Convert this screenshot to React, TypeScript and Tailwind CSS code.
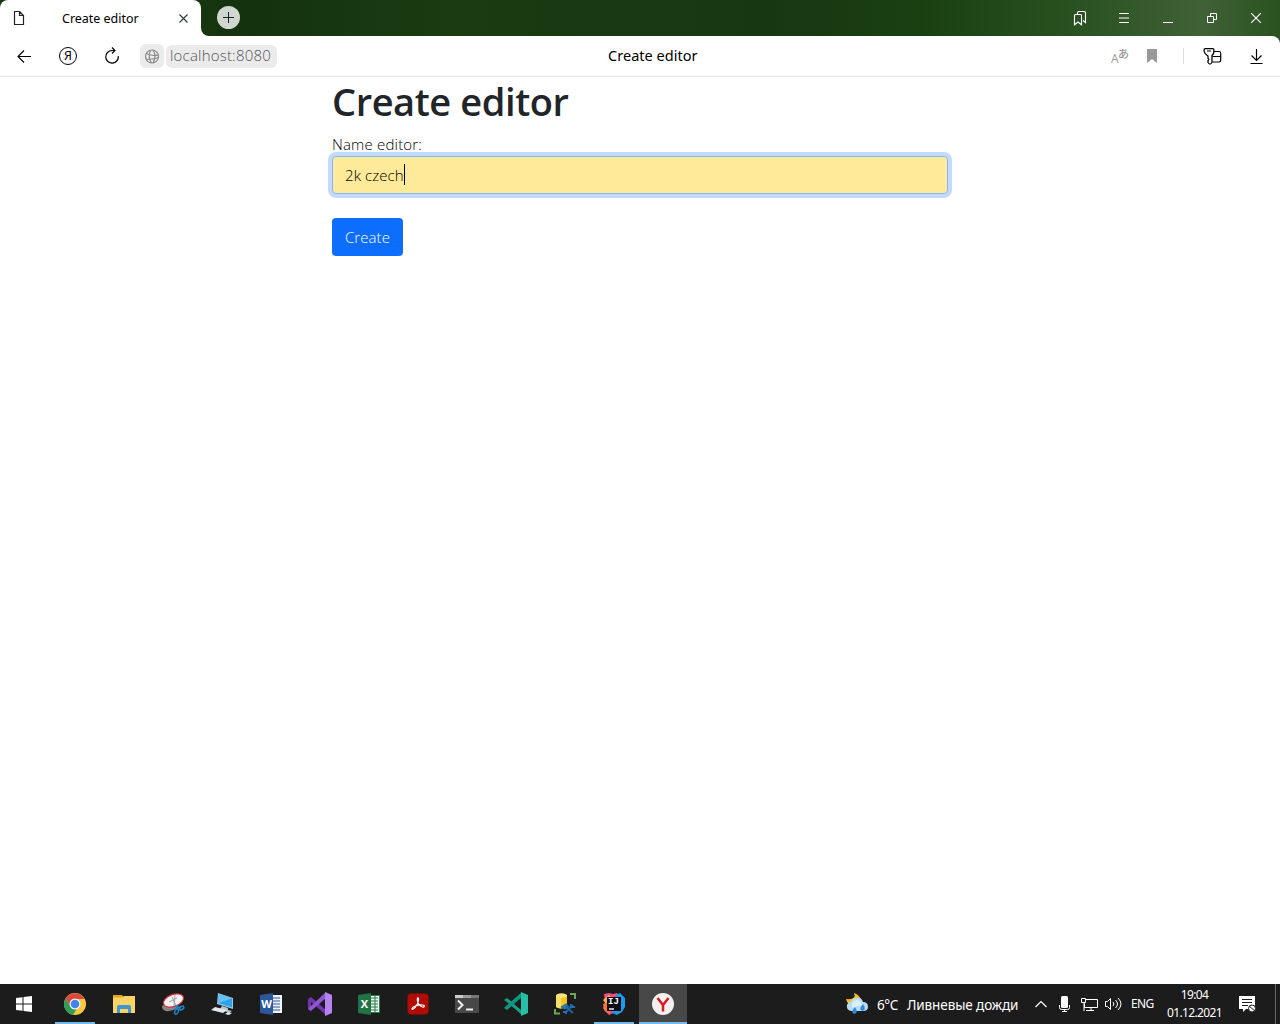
import type { ReactNode } from "react";

function Tile({ children, running = false, active = false }: { children: ReactNode; running?: boolean; active?: boolean }) {
  return (
    <div className={`relative flex h-10 w-12 shrink-0 items-center justify-center ${active ? "bg-[#484848]" : ""}`}>
      {children}
      {(running || active) && (
        <span className={`absolute bottom-0 h-0.5 bg-[#76b9ed] ${active ? "inset-x-0" : "inset-x-1"}`} />
      )}
    </div>
  );
}

function Svg({ w = 24, h = 24, children }: { w?: number; h?: number; children: ReactNode }) {
  return (
    <svg width={w} height={h} viewBox={`0 0 ${w} ${h}`} fill="none" className="shrink-0">
      {children}
    </svg>
  );
}

function TabStrip() {
  return (
    <header className="flex h-9 shrink-0 bg-[linear-gradient(90deg,#173610_0%,#14320e_20%,#193c12_35%,#173712_60%,#1a4012_72%,#28501f_83%,#3f6136_94%,#2a521f_100%)] text-white">
      <div className="flex h-9 w-[201px] items-center rounded-t-lg bg-white text-black">
        <div className="ml-2 flex w-[22px] justify-center">
          <Svg w={12} h={14}>
            <path d="M1.5.5h5l4 4v9h-9zM6.5.5v4h4" stroke="#20242b" strokeWidth="1.2" />
          </Svg>
        </div>
        <span className="ml-8 mt-px w-[78px] whitespace-nowrap font-['Noto_Sans',sans-serif] text-[12.5px] leading-4 tracking-[-0.02px]">Create editor</span>
        <div className="ml-[39px]">
          <Svg w={9} h={9}>
            <path d="m.5.5 8 8m0-8-8 8" stroke="#30343b" strokeWidth="1.1" />
          </Svg>
        </div>
      </div>
      <div className="h-9 w-4 bg-white">
        <div className="h-9 w-4 rounded-bl-lg bg-[#17360f]" />
      </div>
      <button className="mt-1.5 flex size-[23px] items-center justify-center rounded-full bg-[#d0d7cf]">
        <Svg w={11} h={11}>
          <path d="M0 5.5h11M5.5 0v11" stroke="#182029" />
        </Svg>
      </button>
      <div className="ml-auto flex items-center">
        <div className="flex w-11 justify-center">
          <Svg w={14} h={15}>
            <path d="M1.5 4.5q0-1 1-1h5q1 0 1 1v9.300L5 11l-3.500 2.800zM4.500 3V2q0-1.500 1.500-1.500h5q1.500 0 1.500 1.500v9.500L10 9.500" stroke="white" strokeWidth="1.1" />
          </Svg>
        </div>
        <div className="flex w-11 justify-center">
          <Svg w={10} h={10}>
            <path d="M0 .5h10M0 5h10M0 9.500h10" stroke="white" />
          </Svg>
        </div>
        <div className="flex w-11 justify-center pt-2">
          <Svg w={10} h={2}>
            <path d="M0 1.500h10" stroke="white" />
          </Svg>
        </div>
        <div className="flex w-11 justify-center">
          <Svg w={10} h={10}>
            <path d="M.5 3.500h6v6h-6zM3.500 3.500v-3h6v6h-3" stroke="white" />
          </Svg>
        </div>
        <div className="mr-0.5 flex w-11 justify-center">
          <Svg w={10} h={10}>
            <path d="m0 0 10 10M10 0 0 10" stroke="white" strokeWidth="1.1" />
          </Svg>
        </div>
      </div>
    </header>
  );
}

function AddressBar() {
  return (
    <div className="bg-[#2c5120]">
      <nav className="flex h-[41px] items-center rounded-tr-lg border-b border-[#e5e5e5] bg-white text-black">
        <div className="ml-0.5 flex w-11 justify-center">
          <Svg w={14} h={14}>
            <path d="M7 1.500 1 7.500l6 6M1 7.500h13" stroke="black" strokeWidth="1.15" />
          </Svg>
        </div>
        <div className="flex w-11 justify-center">
          <div className="flex size-[18px] items-center justify-center rounded-full border-[1.3px] border-black font-['Noto_Sans',sans-serif] text-[12.500px] leading-none">Я</div>
        </div>
        <div className="flex w-11 justify-center">
          <Svg w={16} h={18}>
            <path d="M8 3.500a6.300 6.300 0 1 0 6.300 5.500M7 3.500h4M8 .5l3 3-3 3" stroke="black" strokeWidth="1.2" />
          </Svg>
        </div>
        <div className="ml-1.5 flex size-6 items-center justify-center rounded-md bg-[#ebebeb]">
          <Svg w={15} h={15}>
            <g stroke="#8a8a8a" strokeWidth="1.150">
              <circle cx="7" cy="7.500" r="6.500" />
              <path d="M1 10q6 1 12.500-1.500M1.500 4.500q5 3 12 1.500M5.500 1.500q-3 6 1 12.500M8 1q4 6 0 13" />
            </g>
          </Svg>
        </div>
        <div className="ml-0.5 flex h-[23px] w-[111px] items-center rounded-md bg-[#ebebeb] pb-px pl-1 font-['Open_Sans',sans-serif] text-[15px] font-light tracking-[0.2px] text-[#555]">
          localhost:8080
        </div>
        <span className="ml-[331px] w-[92px] whitespace-nowrap font-['Noto_Sans',sans-serif] text-[14.500px] tracking-[0.03px]">Create editor</span>
        <div className="ml-auto flex items-center">
          <div className="mr-[18px] flex w-[18px] font-['Open_Sans','Noto_Sans_CJK_JP',sans-serif] leading-none text-[#999]">
            <span className="w-[7px] pt-[5px] text-[12px]">A</span>
            <span className="text-[11px] font-medium leading-[12px]">あ</span>
          </div>
          <Svg w={10} h={14}>
            <path d="M0 0h10v14L5 10l-5 4z" fill="#999" />
          </Svg>
          <div className="ml-[26px] h-4 w-px bg-[#ddd]" />
          <div className="ml-[19px]">
            <Svg w={20} h={19}>
              <path d="M2.500 1.500h7q1.500 0 1.500 1.500 0 4-2 5.500v7q-1 1.500-2 1.500T5 15.500v-2l.8-1-.8-1V9Q1 6.500 1 3q0-1.500 1.500-1.500z" stroke="black" strokeWidth="1.25" strokeLinejoin="round" />
              <path d="M4 4h4M11 4.500h5q1.700 0 1.700 1.700v7.100q0 1.700-1.700 1.700H9.500M9.500 9.500h8" stroke="black" strokeWidth="1.2" />
            </Svg>
          </div>
          <div className="ml-[26px] mr-4">
            <Svg w={15} h={15}>
              <path d="M7.500 0v11.500M2.500 6.500l5 5 5-5M1.500 14.500h12" stroke="black" strokeWidth="1.15" />
            </Svg>
          </div>
        </div>
      </nav>
    </div>
  );
}

function Chrome() {
  return (
    <Svg>
      <circle cx="12" cy="12" r="11" fill="#fbc940" />
      <path d="M2.500 6.500A11 11 0 0 1 21.600 7H12L7.500 14.500z" fill="#d94b40" />
      <path d="M2.500 6.500 8 15.500l7-.5-5 7.900A11 11 0 0 1 2.500 6.500z" fill="#2f9e5b" />
      <circle cx="12" cy="12" r="5.500" fill="#f5f5f5" />
      <circle cx="12" cy="12" r="4.300" fill="#4285e8" />
    </Svg>
  );
}

function OfficeIcon({ letter, excel = false }: { letter: string; excel?: boolean }) {
  return (
    <div className="relative size-6">
      <Svg>
        <path d="M12 3h11v18H12z" fill={excel ? "#287d4b" : "#eef4fc"} />
        {excel && <path d="M14 4h8v16h-8z" fill="#e9f4ed" />}
        <path d="M14 6h7M14 9h7M14 12h7M14 15h7M14 18h7" stroke={excel ? "#287d4b" : "#2c5799"} strokeWidth="1.2" />
        {excel && <path d="M18 4v16" stroke="#287d4b" />}
        <path d="m1 3 13-2v22L1 21z" fill={excel ? "#217346" : "#2c5799"} />
      </Svg>
      <span className="absolute left-0 top-0 w-[15px] text-center font-['Open_Sans',sans-serif] text-[11px] font-bold leading-6 text-white">{letter}</span>
    </div>
  );
}

function Taskbar() {
  return (
    <footer className="flex h-10 shrink-0 items-center bg-[#1c1c1c] text-white">
      <div className="flex gap-px">
        <Tile>
          <Svg w={16} h={16}>
            <path d="m0 2 6.500-.8v6.300H0zM7.500 1 16 0v7.500H7.500zM0 8.500h6.500v6.300L0 14zM7.500 8.500H16V16l-8.500-1z" fill="white" />
          </Svg>
        </Tile>
        <div className="flex gap-px pl-0.5">
          <Tile running><Chrome /></Tile>
          <Tile>
            <Svg>
              <path d="M1 3h9l1.500 2H23v16H1z" fill="#e5a414" />
              <path d="M1 5.500h9L12 4h11v17H1z" fill="#fdd366" />
              <path d="M5 21v-6q0-2 2-2h10q2 0 2 2v6h-3v-4H8v4z" fill="#3c98d4" />
            </Svg>
          </Tile>
          <Tile>
            <Svg>
              <path d="M1 14q0 6 7 5 8-1 10-7l-6-4z" fill="#8b8585" />
              <ellipse cx="12.500" cy="8.500" rx="10.500" ry="6" transform="rotate(-20 12.500 8.500)" fill="#f3f3f3" stroke="#d02c32" strokeWidth="1.200" />
              <path d="m11 5 4 9M14 3l-1 11M8 10l8-4" stroke="#a1a1a1" />
              <path d="m14 14 6 2M15 13l1 5" stroke="#1e83c8" strokeWidth="1.5" />
              <ellipse cx="20.500" cy="16" rx="2.500" ry="1.600" transform="rotate(-25 20.500 16)" stroke="#1e83c8" strokeWidth="1.500" />
              <ellipse cx="15.500" cy="19.500" rx="1.700" ry="2.800" transform="rotate(25 15.500 19.500)" stroke="#1e83c8" strokeWidth="1.500" />
            </Svg>
          </Tile>
          <Tile>
            <Svg>
              <path d="m8 1 15 5v11L7 12z" fill="#9ccbe1" />
              <path d="m9 2 13 4.500v9L8 11z" fill="#2da1e9" />
              <path d="m9 2 13 4.500L8 11z" fill="#64c2f5" />
              <path d="m12 14 6 2v2l4 1-3 2-9-4z" fill="#b9c4ca" />
              <path d="m5 15 12 3-4 3-12-3zM18 20l4 1-3 2-4-1z" fill="#e2e7e9" />
            </Svg>
          </Tile>
          <Tile><OfficeIcon letter="W" /></Tile>
          <Tile>
            <Svg>
              <path d="M0 7 3 5l15 13v5L3 10v9l-3-2z" fill="#6f36b0" />
              <path d="m0 17 3 2L18 6V0L3 14z" fill="#8f55d3" />
              <path d="m17 0 7 3v18l-7 3z" fill="#b684f2" />
            </Svg>
          </Tile>
          <Tile><OfficeIcon letter="X" excel /></Tile>
          <Tile>
            <Svg>
              <rect x="1.500" y="1.500" width="21" height="21" rx="4" fill="#b30b00" />
              <path d="M11.500 6c2-.4 1 4-1 7.500-2 3.600-5 5-4.500 3s6-4 10.500-3.500c3 .4 2 2.500 0 2-4-1-6-6-5-9z" stroke="white" strokeWidth="1.2" />
            </Svg>
          </Tile>
          <Tile>
            <Svg>
              <path d="M0 3h24v18H0z" fill="#484848" />
              <path d="M0 3h8v3H0z" fill="#ccc" /><path d="M8 3h8v3H8z" fill="#999" /><path d="M16 3h8v3h-8z" fill="#777" />
              <path d="m3 8.500 4.500 4.500L3 17.500M11 17.500h7" stroke="#eee" strokeWidth="2" />
            </Svg>
          </Tile>
          <Tile>
            <Svg>
              <path d="m0 8 3-2 15 13v4L3 10z" fill="#16a287" />
              <path d="m0 16 3 2L18 5V0L3 13z" fill="#0d9580" />
              <path d="m17 0 7 3v18l-7 3z" fill="#24bfa5" />
            </Svg>
          </Tile>
          <Tile>
            <Svg>
              <path d="M3 3v12q5 3 11 0V3z" fill="#f5c71e" />
              <path d="M3 4v11q2 1 5 1.500V5z" fill="#fce06e" />
              <ellipse cx="8.500" cy="3.500" rx="5.500" ry="2.200" fill="#ffe47c" />
              <path d="M17 2h5v5M2 17v4.500h5" stroke="#6ca554" strokeWidth="2" />
              <path d="m12 21 8-8M12 14l8 7" stroke="#1b65a4" strokeWidth="2" />
              <path d="m9 15 4-2.500 2 2-3 2zM18 12v3h4M10 20h3v2" stroke="#216fb5" strokeWidth="1.800" />
            </Svg>
          </Tile>
          <Tile running>
            <div className="relative size-6">
              <Svg>
                <path d="m2 2 5-1 4 1 4-1 2 3-6 17-4 2-4-4-2-3 2-5z" fill="#f34a80" />
                <path d="m1 8 6-5 4 5-7 4z" fill="#fbb247" />
                <path d="m14 3 4-2 5 5v9l-3 5-5 3-5-2z" fill="#199cf0" />
                <path d="m1 12 5-2 3 7-2 5-5-4z" fill="#fb7438" />
                <path d="M5 5h14v14H5z" fill="#100b13" />
                <path d="M7 17h5" stroke="white" strokeWidth="1.4" />
              </Svg>
              <span className="absolute left-1.5 top-1.5 font-['Liberation_Mono',monospace] text-[9px] font-bold leading-[8px]">IJ</span>
            </div>
          </Tile>
          <Tile active>
            <Svg>
              <circle cx="12" cy="12" r="11" fill="#f1f1f1" />
              <path d="m6.500 6 5.500 7v6.500M17.500 6 12 13" stroke="#d71920" strokeWidth="2.500" />
            </Svg>
          </Tile>
        </div>
      </div>
      <div className="ml-auto flex h-10 items-center font-['Noto_Sans',sans-serif]">
        <Svg>
          <path d="M8 1q3 7-8 6 2 8 10 7l5-7q-3-5-7-6z" fill="#f5bc24" />
          <path d="M5 19q-5-1-4-6 1-3 4-3 2-5 7-4 4 0 5 4 5 0 5 5 0 4-5 4z" fill="#b8dcf7" />
          <path d="M6 11q3-5 8-2l2 4-10 3z" fill="#d9edfc" />
          <path d="M9 15q-5 5-1 7 5-1 1-7zM17 12q-5 5-1 7 5-1 1-7z" fill="#3389d8" />
        </Svg>
        <span className="ml-[7px] mt-px w-[30px] whitespace-nowrap text-[13.500px] leading-5 tracking-[-0.4px]">6°C</span>
        <span className="mt-px w-[111px] whitespace-nowrap text-[13.500px] leading-5 tracking-[-0.1px]">Ливневые дожди</span>
        <div className="ml-[17px]">
          <Svg w={12} h={8}>
            <path d="m.5 7 5.500-5.500L11.500 7" stroke="white" strokeWidth="1.200" />
          </Svg>
        </div>
        <div className="ml-3">
          <Svg w={11} h={16}>
            <rect x="2" y="0" width="7" height="12" rx="1.500" fill="white" />
            <path d="M.5 9v2.500q0 2 2 2h6q2 0 2-2V9M5.500 13v3M3 15.500h5" stroke="white" />
          </Svg>
        </div>
        <div className="ml-[11px]">
          <Svg w={17} h={15}>
            <path d="M4.500 2.500h12v8H3.500v-4M10 11v3M5 13.500h8M.5 1.500h4v4h-4zM3 6v8" stroke="white" />
          </Svg>
        </div>
        <div className="ml-[7px]">
          <Svg w={17} h={14}>
            <path d="M.5 4.500h2l3-3v11l-3-3h-2zM8 5q2 2 0 4M10.500 3q4 4 0 8M13 1q6 6 0 12" stroke="white" />
          </Svg>
        </div>
        <span className="ml-[9px] w-6 whitespace-nowrap text-[12px] tracking-[-0.6px]">ENG</span>
        <div className="ml-3 w-[55px] whitespace-nowrap text-center text-[12px] leading-[18px] tracking-[-0.65px]">
          <div className="-mt-px">19:04</div>
          <div>01.12.2021</div>
        </div>
        <div className="ml-[17px]">
          <Svg w={17} h={17}>
            <path d="M0 0h16v13H7l-3 3v-3H0z" fill="white" />
            <path d="M3 3.500h10M3 6.500h10M3 9.500h6" stroke="#1c1c1c" />
            <circle cx="13" cy="12.500" r="3.500" fill="white" stroke="#1c1c1c" />
            <path d="m10 10 6 5" stroke="#1c1c1c" />
          </Svg>
        </div>
        <div className="ml-[19px] mr-1 h-10 w-px bg-[#666]" />
      </div>
    </footer>
  );
}

export default function App() {
  return (
    <div className="flex h-screen w-full flex-col overflow-hidden bg-white">
      <TabStrip />
      <AddressBar />
      <main className="mx-auto w-[616px] flex-1 font-['Open_Sans',sans-serif] text-[#212529]">
        <h1 className="whitespace-nowrap text-[38px] font-semibold leading-[48px] tracking-[-0.42px]">Create editor</h1>
        <label htmlFor="name" className="mt-[7px] block text-[15px] font-light leading-6 tracking-[0.18px] text-black">Name editor:</label>
        <div id="name" className="flex h-[38px] items-center rounded border border-[#86b7fe] bg-[#ffea99] pl-3 text-[15px] font-light text-black shadow-[0_0_0_4px_#c2dbfe]">
          <span className="w-[59px] whitespace-nowrap tracking-[0.08px]">2k czech</span>
          <span className="-mt-0.5 h-[21px] w-px bg-black" />
        </div>
        <button className="mt-6 flex h-[38px] w-[71px] items-center justify-center rounded bg-[#0d6efd] text-[15px] font-light tracking-[0.1px] text-white">Create</button>
      </main>
      <Taskbar />
    </div>
  );
}
